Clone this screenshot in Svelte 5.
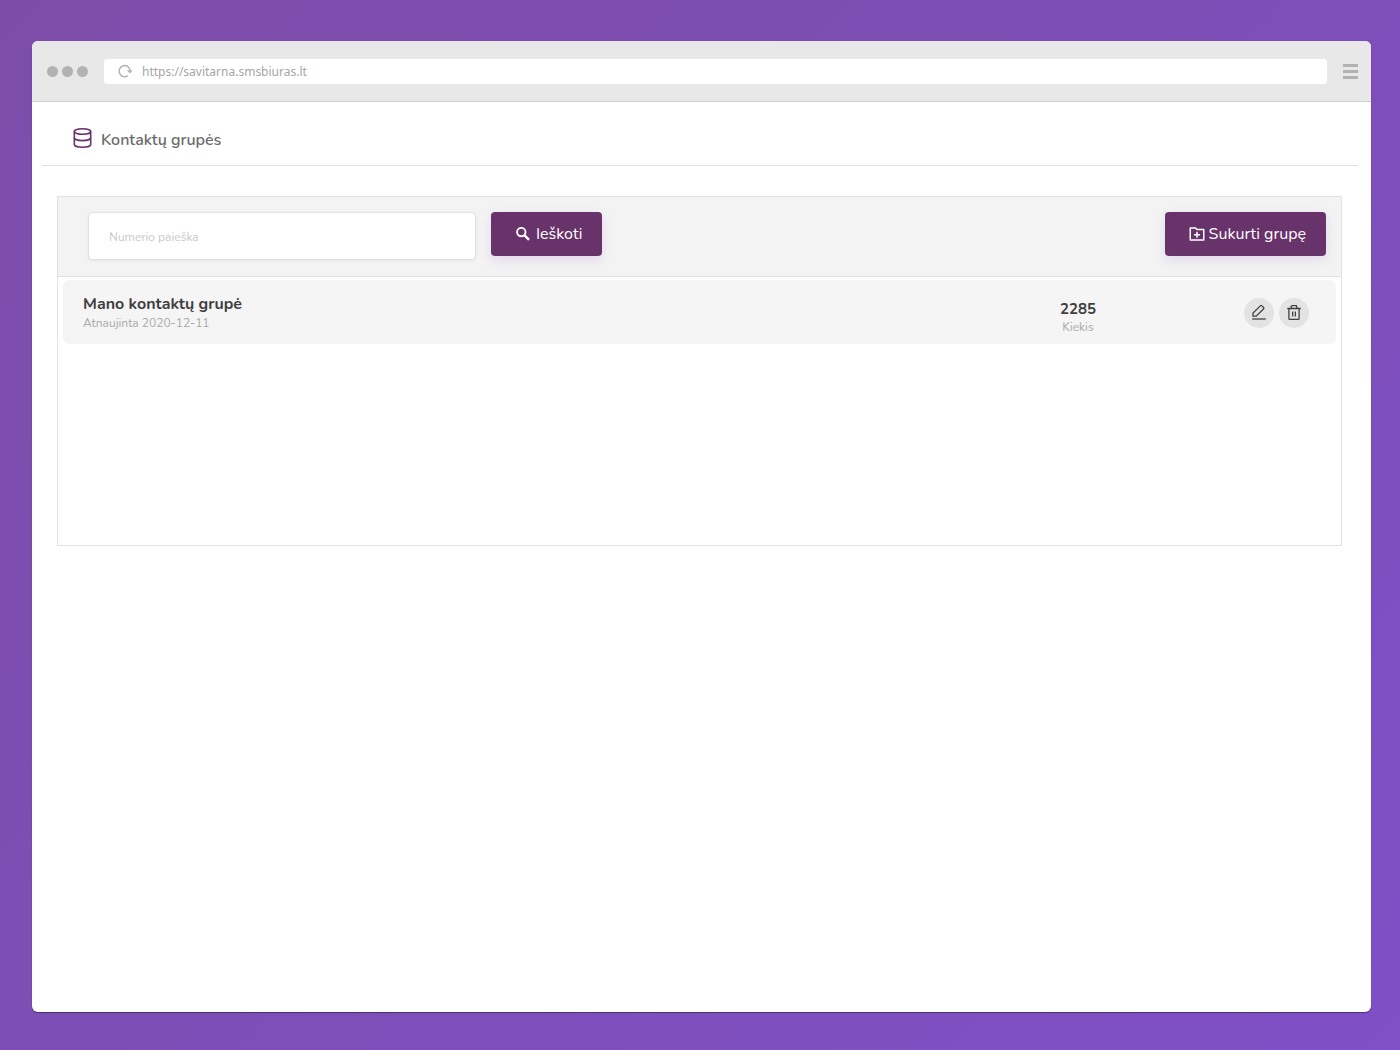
<script lang="ts">
  type Group = { id: number; name: string; updated: string; count: number }

  let groups: Group[] = $state([
    { id: 1, name: 'Mano kontaktų grupė', updated: '2020-12-11', count: 2285 },
  ])
  let address = $state('https://savitarna.smsbiuras.lt')
  let query = $state('')
</script>

<div class="stage">
  <div class="browser">
    <header class="browser__bar">
      <div class="browser__dots"><span></span><span></span><span></span></div>
      <div class="browser__address">
        <svg width="16" height="16" viewBox="0 0 16 16" aria-hidden="true">
          <path d="M10.8 12.6A5.5 5.5 0 1 1 13.1 7.8" fill="none" stroke="#b2b2b2" stroke-width="1.5" />
          <path d="M10 7.2h5.6l-2.8 3.4z" fill="#b2b2b2" />
        </svg>
        <input type="text" bind:value={address} aria-label="Adresas" />
      </div>
      <button class="browser__menu" aria-label="Meniu"><span></span><span></span><span></span></button>
    </header>

    <main class="page">
      <div class="page__head">
        <svg width="24" height="24" viewBox="0 0 24 24" fill="none" stroke="#68326a" stroke-width="1.6" aria-hidden="true">
          <ellipse cx="12.5" cy="5.5" rx="8.2" ry="2.8" />
          <path d="M4.3 5.5v13c0 1.5 3.7 2.8 8.2 2.8s8.2-1.3 8.2-2.8v-13" />
          <path d="M4.3 11.8c0 1.5 3.7 2.8 8.2 2.8s8.2-1.3 8.2-2.8" />
        </svg>
        <h1>Kontaktų grupės</h1>
      </div>

      <section class="panel">
        <form class="toolbar" onsubmit={(e) => e.preventDefault()}>
          <input
            class="toolbar__search"
            type="text"
            bind:value={query}
            placeholder="Numerio paieška"
            aria-label="Numerio paieška"
          />
          <button class="btn btn--search" type="submit">
            <svg width="14" height="14" viewBox="0 0 14 14" fill="none" stroke="currentColor" aria-hidden="true">
              <circle cx="5.3" cy="5.1" r="4.2" stroke-width="1.9" />
              <path d="M8.4 8.2l4.6 4.6" stroke-width="2.4" />
            </svg>
            Ieškoti
          </button>
          <button class="btn btn--create" type="button">
            <svg width="18" height="18" viewBox="0 0 24 24" fill="currentColor" aria-hidden="true">
              <path d="M12.414 5H21a1 1 0 0 1 1 1v14a1 1 0 0 1-1 1H3a1 1 0 0 1-1-1V4a1 1 0 0 1 1-1h7.414l2 2zM4 5v14h16V7h-8.414l-2-2H4zm7 7V9h2v3h3v2h-3v3h-2v-3H8v-2h3z" />
            </svg>
            Sukurti grupę
          </button>
        </form>

        <ul class="groups">
          {#each groups as group (group.id)}
            <li class="group">
              <div class="group__info">
                <h2>{group.name}</h2>
                <p>Atnaujinta {group.updated}</p>
              </div>
              <div class="group__count">
                <strong>{group.count}</strong>
                <p>Kiekis</p>
              </div>
              <div class="group__actions">
                <button aria-label="Redaguoti">
                  <svg width="18" height="18" viewBox="0 0 24 24" fill="none" stroke="currentColor" stroke-width="1.7" aria-hidden="true">
                    <path d="M4 16.2v-4.2L14.2 2.2a1 1 0 0 1 1.4 0l2.7 2.7a1 1 0 0 1 0 1.4L8.2 16.2z" />
                    <path d="M3 20h18" />
                  </svg>
                </button>
                <button aria-label="Ištrinti">
                  <svg width="18" height="18" viewBox="0 0 24 24" fill="none" stroke="currentColor" stroke-width="1.7" aria-hidden="true">
                    <path d="M3 6h18M5.2 6v13.5a1 1 0 0 0 1 1h11.6a1 1 0 0 0 1-1V6M8.3 6V3.3a1 1 0 0 1 1-1h5.4a1 1 0 0 1 1 1V6M10.2 10v6.5M13.8 10v6.5" />
                  </svg>
                </button>
              </div>
            </li>
          {/each}
        </ul>
      </section>
    </main>
  </div>
</div>

<style>
  :global(body) {
    margin: 0;
  }

  .stage {
    box-sizing: border-box;
    display: flex;
    min-height: 100vh;
    padding: 41px 29px 38px 32px;
    background: linear-gradient(135deg, #7c4da8, #7f50c6);
    font-family: Nunito, 'Noto Sans', sans-serif;
    color: #3f3f3f;
  }

  h1,
  h2,
  p,
  ul {
    margin: 0;
    padding: 0;
  }

  button,
  input {
    font-family: inherit;
    border: 0;
    padding: 0;
  }

  .browser {
    flex: 1;
    min-width: 0;
    background: #fff;
    border-radius: 6px;
    overflow: hidden;
    box-shadow: 0 1px 1px rgba(0, 0, 0, 0.4);
  }

  .browser__bar {
    display: flex;
    align-items: center;
    gap: 16px;
    height: 60px;
    padding: 0 13px 0 15px;
    background: #e8e8e8;
    border-bottom: 1px solid #d0d0d0;
  }

  .browser__dots {
    display: flex;
    gap: 4px;
  }

  .browser__dots span {
    width: 11px;
    height: 11px;
    border-radius: 50%;
    background: #b2b2b2;
  }

  .browser__address {
    flex: 1;
    display: flex;
    align-items: center;
    gap: 9px;
    height: 25px;
    padding: 0 13px;
    background: #fff;
    border-radius: 3px;
  }

  .browser__address input {
    flex: 1;
    font-family: 'Noto Sans', sans-serif;
    font-size: 12px;
    color: #a6a6a6;
    background: none;
    outline: none;
  }

  .browser__menu {
    display: flex;
    flex-direction: column;
    gap: 3px;
    width: 15px;
    background: none;
  }

  .browser__menu span {
    height: 3px;
    background: #b2b2b2;
  }

  .page {
    padding: 0 13px 0 10px;
  }

  .page__head {
    display: flex;
    align-items: center;
    gap: 7px;
    height: 63px;
    padding: 0 28px;
    border-bottom: 1px solid #e2e2e2;
  }

  .page__head svg {
    margin-top: 8px;
  }

  .page__head h1 {
    padding-top: 12px;
    font-size: 16px;
    line-height: 24px;
    font-weight: 600;
    color: #6b6b6b;
  }

  .panel {
    min-height: 348px;
    margin: 30px 16px 0 15px;
    border: 1px solid #e2e2e2;
  }

  .toolbar {
    display: flex;
    align-items: flex-start;
    padding: 15px 15px 16px 30px;
    background: #f3f3f3;
    border-bottom: 1px solid #e2e2e2;
  }

  .toolbar__search {
    box-sizing: border-box;
    flex: 0 1 388px;
    min-width: 0;
    height: 48px;
    padding: 2px 20px 0;
    background: #fff;
    border: 1px solid #e0e0e0;
    border-radius: 4px;
    box-shadow: 0 1px 3px rgba(0, 0, 0, 0.06);
    font-size: 12px;
    outline: none;
  }

  .toolbar__search::placeholder {
    color: #c9c9c9;
    opacity: 1;
  }

  .btn {
    display: flex;
    align-items: center;
    height: 44px;
    background: #68326a;
    border-radius: 4px;
    box-shadow: 0 4px 12px rgba(130, 60, 190, 0.14);
    font-size: 16px;
    color: #fff;
    white-space: nowrap;
    cursor: pointer;
  }

  .btn--search {
    gap: 6px;
    margin-left: 15px;
    padding: 0 20px 0 25px;
  }

  .btn--create {
    gap: 3px;
    margin-left: auto;
    padding: 0 20px 0 23px;
  }

  .groups {
    padding: 3px 5px;
    list-style: none;
  }

  .group {
    display: flex;
    align-items: center;
    height: 64px;
    padding: 0 27px 0 20px;
    background: #f5f5f5;
    border-radius: 6px;
  }

  .group__info {
    flex: 1;
    padding-top: 2px;
  }

  .group h2 {
    font-size: 16px;
    line-height: 20px;
    font-weight: 700;
  }

  .group strong {
    font-size: 15px;
    line-height: 18px;
    font-weight: 700;
  }

  .group p {
    font-size: 12px;
    line-height: 18px;
    color: #a9a9a9;
  }

  .group__count {
    width: 100px;
    margin-right: 116px;
    padding-top: 12px;
    text-align: center;
  }

  .group__count strong {
    display: block;
  }

  .group__actions {
    display: flex;
    gap: 5px;
    padding-top: 2px;
  }

  .group__actions button {
    display: flex;
    align-items: center;
    justify-content: center;
    width: 30px;
    height: 30px;
    border-radius: 50%;
    background: #e3e3e3;
    color: #3f3f3f;
    cursor: pointer;
  }
</style>
